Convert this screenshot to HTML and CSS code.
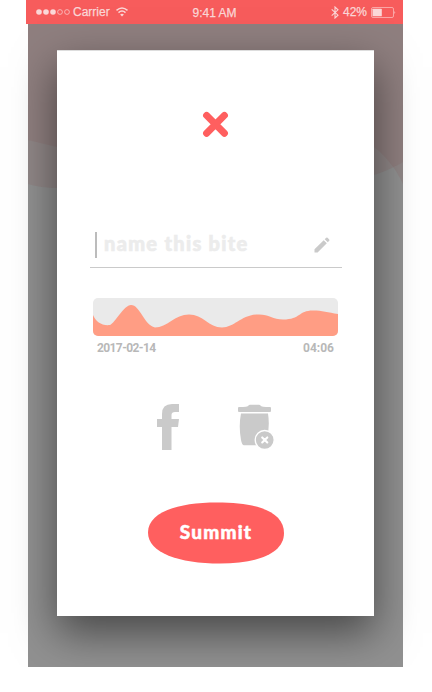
FILE: index.html
```
<!DOCTYPE html>
<html lang="en">
<head>
<meta charset="utf-8">
<title>Name this bite</title>
<link rel="stylesheet" href="styles.css">
</head>
<body>
<main class="phone">
  <svg class="backdrop" viewBox="0 0 375 667" aria-hidden="true">
    <path d="M0 0H375V162C355 174 330 181 290 188H29Q13 188 0 184Z" fill="#8b6565" fill-opacity=".22"/>
    <path d="M0 0H375V184C368 169 359 157 346 147H29L0 140Z" fill="#8b6262" fill-opacity=".22"/>
  </svg>
  <header class="status">
    <div class="side">
      <svg width="34" height="8" viewBox="0 0 34 8"><g fill="currentColor"><circle cx="3" cy="4" r="2.8"/><circle cx="10" cy="4" r="2.8"/><circle cx="17" cy="4" r="2.8"/></g><g fill="none" stroke="currentColor" stroke-width=".7"><circle cx="24" cy="4" r="2.4"/><circle cx="31" cy="4" r="2.4"/></g></svg>
      <span class="carrier">Carrier</span>
      <svg class="wifi" width="12" height="10" viewBox="0 0 12 10" fill="none" stroke="currentColor" stroke-width="1.4"><path d="M.5 3.4Q6-1.4 11.5 3.4M2.5 5.6Q6 2.6 9.5 5.6"/><path d="M4.1 7.4Q6 5.9 7.9 7.4L6 9.4Z" fill="currentColor" stroke="none"/></svg>
    </div>
    <time class="clock">9:41 AM</time>
    <div class="side right">
      <svg width="8" height="13" viewBox="0 0 8 13" fill="none" stroke="currentColor" stroke-width="1.1"><path d="M.7 3.4L7 9.2L4 12V1L7 3.8L.7 9.6"/></svg>
      <span class="percent">42%</span>
      <svg width="25" height="11" viewBox="0 0 25 11"><rect x=".5" y=".5" width="22" height="10" rx="1.5" fill="none" stroke="currentColor" stroke-opacity=".6"/><rect x="1.5" y="1.7" width="9.3" height="7.6" rx=".6" fill="currentColor"/><path d="M23.5 4Q25 5.5 23.5 7Z" fill="currentColor"/></svg>
    </div>
  </header>
  <section class="modal">
    <svg class="close" width="27" height="27" viewBox="0 0 27 27"><path d="M4.6 4.4L22.4 22.2M22.4 4.4L4.6 22.2" stroke="#ff5f5f" stroke-width="7" stroke-linecap="round"/></svg>
    <div class="field">
      <i class="caret"></i>
      <span class="placeholder">name this bite</span>
      <svg class="pencil" width="16" height="16" viewBox="0 0 16 16" fill="#cacaca"><path d="M.5 12.3L9.7 3.2L12.8 6.3L3.6 15.5H.5ZM10.7 2.2L12.2.8Q12.9.2 13.6.8L15.2 2.4Q15.8 3.1 15.2 3.8L13.8 5.3Z"/></svg>
    </div>
    <svg class="wave" width="245" height="38" viewBox="0 0 245 38"><path d="M0 17C3 24 9 28 17 27C22 25 31 7 38 7C47 7 51 27 62 29.5C74 29.5 82 16.5 96 16.5C110 16.5 116 29.5 129 29.5C142 29.5 148 16.5 166 16.5C176 16.5 180 21.5 190 21.5C208 21.5 205 12.5 220 12.5C229 12.5 235 14.5 245 16V38H0Z" fill="#ff9d84"/></svg>
    <div class="meta"><time class="date">2017-02-14</time><time>04:06</time></div>
    <div class="actions">
      <svg width="23" height="46" viewBox="0 0 23 46" fill="#cacaca"><path d="M5 46V23H0V15H5V10Q5 0 15 0H22V8H18Q14.5 8 14.5 11V15H22L21 23H14.5V46Z"/></svg>
      <svg width="37" height="46" viewBox="0 0 37 46" fill="#cacaca"><path d="M1 3Q10 3 10.5 1.5Q11 .8 12 .8H21Q22 .8 22.5 1.5Q23 3 32 3Q33 3 33 4V7Q33 8 32 8H1Q0 8 0 7V4Q0 3 1 3ZM3 9.6H30Q32 22 29 35Q28.5 39 27.5 41.3H6Q4 41.3 3 36Q.5 22 3 9.6Z"/><circle cx="26.7" cy="36" r="9.5" stroke="white" stroke-width="1.3"/><path d="M24.2 33.4L29.3 38.5M29.3 33.4L24.2 38.5" stroke="white" stroke-width="2.1" stroke-linecap="round"/></svg>
    </div>
    <button class="submit">
      <svg class="blob" viewBox="0 0 136 62" preserveAspectRatio="none"><path d="M0 30.5C0 10 30 .5 69 .5C110 .5 136 10 136 31C136 52 108 61.5 72 61.5C31 61.5 0 51 0 30.5Z" fill="#ff5f5f"/></svg>
      <span class="submit-label">Summit</span>
    </button>
  </section>
</main>
</body>
</html>
```
FILE: styles.css
```
* { box-sizing: border-box; }
body { margin: 0; background: #fff; font-family: "Liberation Sans", sans-serif; overflow: hidden; }
svg { display: block; flex: none; }
.phone { position: relative; width: 375px; height: 667px; margin-left: 28px; background: #919191; }
.backdrop { position: absolute; inset: 0; width: 375px; height: 667px; }
.status { position: relative; display: flex; align-items: center; width: 377px; height: 24px; margin-left: -2px; padding: 0 7px 0 10px; background: #f75c5c; color: #fbd7d7; font-size: 12px; line-height: 24px; -webkit-text-stroke: .25px currentColor; }
.side { display: flex; flex: 1; align-items: center; gap: 4px; white-space: nowrap; }
.side.right { justify-content: flex-end; }
.carrier { margin-left: -1px; }
.wifi { margin-left: 2px; }
.clock { padding-top: 2px; margin: 0 3px 0 0; }
.modal { position: relative; display: flex; flex-direction: column; width: 317px; height: 566px; margin: 26px 0 0 29px; padding: 60px 32px 0 33px; background: #fff; border-top: 1px solid #ddd; box-shadow: 0 17px 40px rgba(0,0,0,.5); }
.close { align-self: flex-start; margin-left: 112px; }
.field { display: flex; align-items: center; width: 252px; height: 46px; margin-top: 84px; padding: 0 12px 0 5px; border-bottom: 1px solid #cacaca; }
.caret { width: 2px; height: 26px; background: #bcbcbc; }
.placeholder { margin: -3px 0 0 7px; color: #ececec; font: 900 20px/26px Lato, sans-serif; letter-spacing: 1.3px; white-space: nowrap; -webkit-text-stroke: .6px #ececec; }
.pencil { margin-left: auto; }
.wave { margin: 30px 0 0 3px; border-radius: 5px; background: #eaeaea; }
.meta { display: flex; justify-content: space-between; width: 237px; margin: 5px 0 0 7px; color: #b8b8b8; font: 700 12px/14px Roboto, sans-serif; }
.date { letter-spacing: -.6px; }
.actions { display: flex; align-items: flex-start; gap: 58px; margin: 49px 0 0 67px; }
.submit { position: relative; width: 136px; height: 62px; margin: 52px 0 0 58px; padding: 0; border: 0; background: none; color: #fff; font: 900 19px/54px Lato, sans-serif; letter-spacing: 1.2px; -webkit-text-stroke: .5px #fff; }
.blob { position: absolute; inset: 0; width: 136px; height: 62px; }
.submit-label { position: relative; display: block; margin-top: -3px; }
```
